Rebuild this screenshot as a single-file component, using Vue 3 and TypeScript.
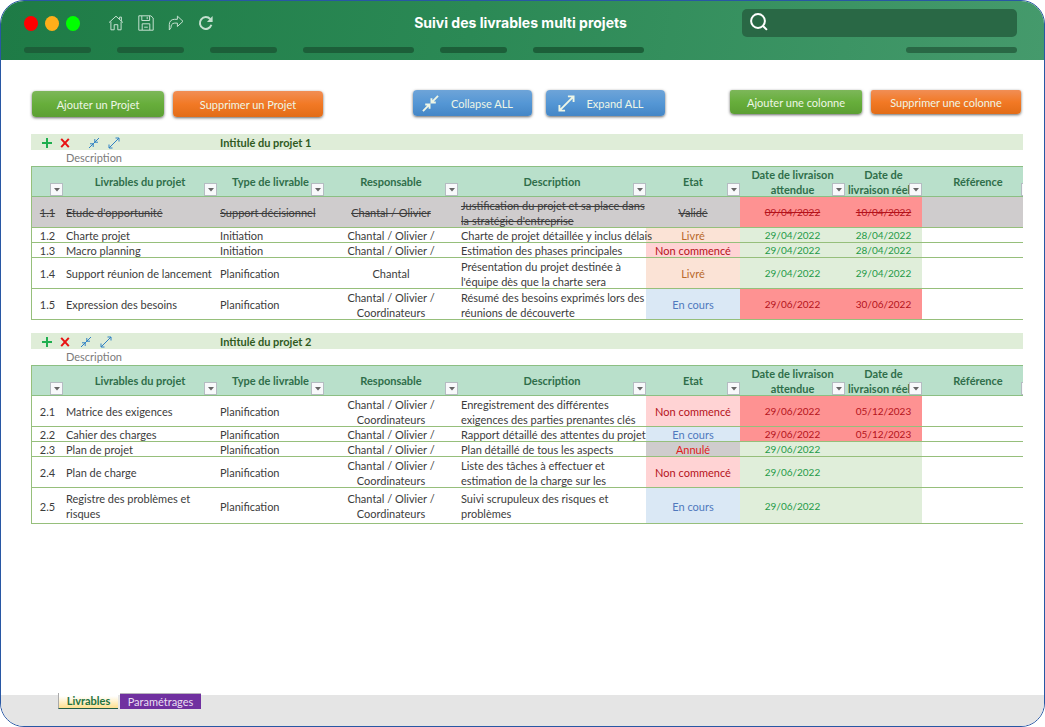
<script setup lang="ts">
import { ref } from 'vue'

type Tone = 'late' | 'ok'
type Status = 'valide' | 'livre' | 'non' | 'cours' | 'annule'

interface Row {
  id: string
  name: string
  kind: string
  owner: string
  text: string
  status: Status
  due: string
  done: string
  tone: Tone
  size: 'one' | 'two' | 'high'
}

interface Project {
  id: number
  title: string
  tight: boolean
  rows: Row[]
}

const statusLabel: Record<Status, string> = {
  valide: 'Validé',
  livre: 'Livré',
  non: 'Non commencé',
  cours: 'En cours',
  annule: 'Annulé',
}

const columns = [
  { key: 'num', label: '' },
  { key: 'name', label: 'Livrables du projet' },
  { key: 'kind', label: 'Type de livrable' },
  { key: 'owner', label: 'Responsable' },
  { key: 'text', label: 'Description' },
  { key: 'status', label: 'Etat' },
  { key: 'due', label: 'Date de livraison\nattendue' },
  { key: 'done', label: 'Date de\nlivraison réelle' },
  { key: 'reference', label: 'Référence' },
]

const both = 'Chantal / Olivier /'
const team = 'Chantal / Olivier /\nCoordinateurs'

const projects: Project[] = [
  {
    id: 1,
    title: 'Intitulé du projet 1',
    tight: false,
    rows: [
      { id: '1.1', name: "Etude d'opportunité", kind: 'Support décisionnel', owner: 'Chantal / Olivier', text: "Justification du projet et sa place dans\nla stratégie d'entreprise", status: 'valide', due: '09/04/2022', done: '10/04/2022', tone: 'late', size: 'two' },
      { id: '1.2', name: 'Charte projet', kind: 'Initiation', owner: both, text: 'Charte de projet détaillée y inclus délais', status: 'livre', due: '29/04/2022', done: '28/04/2022', tone: 'ok', size: 'one' },
      { id: '1.3', name: 'Macro planning', kind: 'Initiation', owner: both, text: 'Estimation des phases principales', status: 'non', due: '29/04/2022', done: '28/04/2022', tone: 'ok', size: 'one' },
      { id: '1.4', name: 'Support réunion de lancement', kind: 'Planification', owner: 'Chantal', text: "Présentation du projet destinée à\nl'équipe dès que la charte sera", status: 'livre', due: '29/04/2022', done: '29/04/2022', tone: 'ok', size: 'two' },
      { id: '1.5', name: 'Expression des besoins', kind: 'Planification', owner: team, text: 'Résumé des besoins exprimés lors des\nréunions de découverte', status: 'cours', due: '29/06/2022', done: '30/06/2022', tone: 'late', size: 'two' },
    ],
  },
  {
    id: 2,
    title: 'Intitulé du projet 2',
    tight: true,
    rows: [
      { id: '2.1', name: 'Matrice des exigences', kind: 'Planification', owner: team, text: 'Enregistrement des différentes\nexigences des parties prenantes clés', status: 'non', due: '29/06/2022', done: '05/12/2023', tone: 'late', size: 'two' },
      { id: '2.2', name: 'Cahier des charges', kind: 'Planification', owner: both, text: 'Rapport détaillé des attentes du projet', status: 'cours', due: '29/06/2022', done: '05/12/2023', tone: 'late', size: 'one' },
      { id: '2.3', name: 'Plan de projet', kind: 'Planification', owner: both, text: 'Plan détaillé de tous les aspects', status: 'annule', due: '29/06/2022', done: '', tone: 'ok', size: 'one' },
      { id: '2.4', name: 'Plan de charge', kind: 'Planification', owner: team, text: 'Liste des tâches à effectuer et\nestimation de la charge sur les', status: 'non', due: '29/06/2022', done: '', tone: 'ok', size: 'two' },
      { id: '2.5', name: 'Registre des problèmes et\nrisques', kind: 'Planification', owner: team, text: 'Suivi scrupuleux des risques et\nproblèmes', status: 'cours', due: '29/06/2022', done: '', tone: 'ok', size: 'high' },
    ],
  },
]

const query = ref('')
const sheet = ref('Livrables')
</script>

<template>
  <div class="window">
    <header class="titlebar">
      <div class="toprow">
        <div class="left">
          <div class="lights">
            <span class="light red"></span>
            <span class="light amber"></span>
            <span class="light green"></span>
          </div>
          <nav class="tools">
            <button type="button" aria-label="Accueil">
              <svg viewBox="0 0 16 16"><path d="M1 7.6 8 1.2l7 6.4M11.6 4.2V2.1h1.8v3.8M2.9 6.6v8.2h3.3V9.7h3.6v5.1h3.3V6.6" /></svg>
            </button>
            <button type="button" aria-label="Enregistrer">
              <svg viewBox="0 0 16 16"><path d="M.8.8h12l2.4 2.200v12.200H.8zM3.800.9v4.600h7.800V.9M9.200 1.800v2.400M4.200 15V8.800h7.600V15M6.200 12.200h3.600" /></svg>
            </button>
            <button type="button" aria-label="Partager">
              <svg viewBox="0 0 16 16"><path d="M1.3 15V9.6C1.3 6.300 3.400 4.300 6.500 4.300H9.400V1.100L15 6.300 9.400 11.500V8.100H6.700C3.800 8.100 3 10.400 3 12.500L1.300 15" /></svg>
            </button>
            <button type="button" aria-label="Actualiser">
              <svg viewBox="0 0 16 16"><path class="thick" d="M13.400 9.800A5.900 5.900 0 1 1 12.300 4.200" /><path class="solid" d="M14.600 1v5.900H8.900z" /></svg>
            </button>
          </nav>
        </div>
        <h1>Suivi des livrables multi projets</h1>
        <label class="search">
          <svg viewBox="0 0 18 18"><circle cx="8" cy="8" r="6.900" /><path d="M13 13l3.900 3.900" /></svg>
          <input v-model="query" type="text" aria-label="Rechercher" />
        </label>
      </div>
      <div class="pills">
        <i></i><i></i><i></i><i class="long"></i><i></i><i class="long"></i><i class="long last"></i>
      </div>
    </header>

    <main class="content">
      <div class="actions">
        <div class="group">
          <button type="button" class="btn btn-green">Ajouter un Projet</button>
          <button type="button" class="btn btn-orange wide">Supprimer un Projet</button>
        </div>
        <div class="group middle">
          <button type="button" class="btn btn-blue">
            <svg viewBox="0 0 18 18"><path d="M1 17l7-7M3.400 10H8v4.600M17 1l-7 7M10 3.400V8h4.600" /></svg>
            <span>Collapse ALL</span>
          </button>
          <button type="button" class="btn btn-blue">
            <svg viewBox="0 0 18 18"><path d="M1.500 16.500l15-15M10.500 1.500h6v6M1.500 10.500v6h6" /></svg>
            <span>Expand ALL</span>
          </button>
        </div>
        <div class="group right">
          <button type="button" class="btn btn-green">Ajouter une colonne</button>
          <button type="button" class="btn btn-orange wide">Supprimer une colonne</button>
        </div>
      </div>

      <section v-for="p in projects" :key="p.id" class="project">
        <div class="band">
          <div class="marks" :class="{ tight: p.tight }">
            <button type="button" class="plus" aria-label="Ajouter une ligne">
              <svg viewBox="0 0 12 12"><path d="M6 1v10M1 6h10" /></svg>
            </button>
            <button type="button" class="cross" aria-label="Supprimer une ligne">
              <svg viewBox="0 0 12 12"><path d="M2.200 1.800l7.600 8.400M9.800 1.800L2.200 10.200" /></svg>
            </button>
            <button type="button" class="blue fold" aria-label="Réduire">
              <svg viewBox="0 0 12 12"><path d="M1 11L11 1M2 6.800h3.200V10M10 5.200H6.800V2" /></svg>
            </button>
            <button type="button" class="blue" aria-label="Développer">
              <svg viewBox="0 0 12 12"><path d="M1 11L11 1M7.500 1H11v3.500M1 7.500V11h3.500" /></svg>
            </button>
          </div>
          <h2>{{ p.title }}</h2>
        </div>
        <p class="note">Description</p>
        <table>
          <colgroup>
            <col v-for="c in columns" :key="c.key" :class="'c-' + c.key" />
          </colgroup>
          <thead>
            <tr>
              <th v-for="c in columns" :key="c.key" scope="col">
                {{ c.label }}
                <button type="button" class="filter" :aria-label="'Filtrer ' + c.label">
                  <svg viewBox="0 0 6 4"><path d="M0 0h6L3 3.500z" /></svg>
                </button>
              </th>
            </tr>
          </thead>
          <tbody>
            <tr v-for="r in p.rows" :key="r.id" :class="[r.size, { closed: r.status === 'valide' }]">
              <td class="mid">{{ r.id }}</td>
              <td>{{ r.name }}</td>
              <td>{{ r.kind }}</td>
              <td class="mid">{{ r.owner }}</td>
              <td>{{ r.text }}</td>
              <td class="mid" :class="'s-' + r.status">{{ statusLabel[r.status] }}</td>
              <td class="mid date" :class="r.tone">{{ r.due }}</td>
              <td class="mid date" :class="r.tone">{{ r.done }}</td>
              <td></td>
            </tr>
          </tbody>
        </table>
      </section>
    </main>

    <footer class="tabs">
      <button type="button" class="tab active" @click="sheet = 'Livrables'">Livrables</button>
      <button type="button" class="tab violet" @click="sheet = 'Paramétrages'">Paramétrages</button>
    </footer>
  </div>
</template>

<style>
body {
  background: #fff;
}
</style>

<style scoped>
* {
  box-sizing: border-box;
}
button {
  border: 0;
  padding: 0;
  background: none;
  font: inherit;
  color: inherit;
}
svg {
  display: block;
  fill: none;
  stroke: currentColor;
}
.window {
  display: flex;
  flex-direction: column;
  min-height: 100vh;
  border: 1px solid #2857a4;
  border-radius: 24px;
  overflow: hidden;
  background: #fff;
  font-family: Lato, "Open Sans", sans-serif;
  font-size: 11px;
  line-height: 15px;
  color: #3c3c3c;
}
.titlebar {
  height: 59px;
  padding: 8px 27px 0 23px;
  background: linear-gradient(100deg, #1e7b46 0%, #2b8955 45%, #459a6c 100%);
}
.toprow {
  display: grid;
  grid-template-columns: 1fr auto 1fr;
  align-items: center;
}
.left {
  display: flex;
  align-items: center;
}
.lights {
  display: flex;
  gap: 7px;
}
.light {
  width: 14px;
  height: 15px;
  border-radius: 50%;
}
.red {
  background: #f00;
}
.amber {
  background: #ffae1a;
}
.light.green {
  background: #0f0;
}
.tools {
  display: flex;
  gap: 14px;
  margin-left: 28px;
  color: #c4e0cf;
}
.tools svg {
  width: 16px;
  height: 16px;
}
.thick {
  stroke-width: 2;
}
.solid {
  fill: currentColor;
  stroke: none;
}
h1 {
  margin: 0;
  font: 700 14px/28px Inter, sans-serif;
  color: #fff;
}
.search {
  display: flex;
  align-items: center;
  justify-self: end;
  width: 275px;
  height: 28px;
  padding: 0 8px 2px;
  border-radius: 5px;
  background: #296845;
  color: #fff;
}
.search svg {
  width: 18px;
  height: 18px;
  stroke-width: 2;
}
.search input {
  flex: 1;
  min-width: 0;
  border: 0;
  outline: 0;
  background: none;
  color: #fff;
}
.pills {
  display: flex;
  gap: 26px;
  margin-top: 10px;
}
.pills i {
  width: 67px;
  height: 6px;
  border-radius: 3px;
  background: #1c5f39;
}
.pills .long {
  width: 111px;
}
.pills .last {
  margin-left: auto;
  background: #296845;
}
.content {
  flex: 1;
  padding: 30px 21px 0 30px;
  overflow: hidden;
}
.actions {
  display: flex;
  justify-content: space-between;
  height: 44px;
}
.group {
  display: flex;
  align-items: flex-start;
  gap: 9px;
  padding: 1px 0 0 1px;
}
.middle {
  gap: 14px;
  padding-top: 0;
  margin-left: 24px;
}
.right {
  padding: 0 2px 0 0;
}
.btn {
  display: flex;
  align-items: center;
  justify-content: center;
  width: 132px;
  height: 26px;
  border-radius: 4px;
  box-shadow: 0 1px 3px rgba(0, 0, 0, 0.6);
  color: #eef6e6;
}
.wide {
  width: 150px;
}
.btn-green {
  background: linear-gradient(#7db75a, #67ae3b 50%, #5c9f33);
}
.btn-orange {
  background: linear-gradient(#f18e55, #f27925 50%, #e26c17);
}
.btn-blue {
  width: 119px;
  gap: 12px;
  padding-right: 10px;
  background: linear-gradient(#6ea4d8, #5597d5 50%, #4486c6);
}
.btn-blue svg {
  width: 17px;
  height: 17px;
  stroke-width: 2;
}
.right .btn {
  height: 24px;
  border-radius: 2px 2px 4px 4px;
}
.project {
  margin-bottom: 13px;
  overflow: hidden;
}
.band {
  display: flex;
  align-items: center;
  height: 16px;
  padding-top: 2px;
  background: #dfedd8;
}
.marks {
  display: flex;
  align-items: center;
  width: 189px;
  padding-left: 10px;
  gap: 6px;
}
.marks svg {
  width: 12px;
  height: 12px;
}
.marks .fold {
  margin-left: 11px;
}
.marks .blue + .blue {
  margin-left: 2px;
}
.marks.tight .fold {
  margin-left: 3px;
}
.plus {
  color: #1fae4f;
}
.plus svg {
  stroke-width: 2;
}
.cross {
  color: #e81313;
}
.cross svg {
  stroke-width: 2;
}
.blue {
  color: #2f80c4;
}
h2 {
  margin: 0;
  font-size: 11px;
  line-height: 14px;
  font-weight: 700;
  color: #2f5a1e;
}
.note {
  margin: 0;
  padding-left: 35px;
  line-height: 16px;
  color: #7b7b7b;
}
table {
  width: calc(100% + 11px);
  table-layout: fixed;
  border-spacing: 0;
  border-left: 1px solid #96bf7b;
}
.c-num {
  width: 31px;
}
.c-name {
  width: 154px;
}
.c-kind {
  width: 107px;
}
.c-owner {
  width: 134px;
}
.c-status {
  width: 94px;
}
.c-due {
  width: 105px;
}
.c-done {
  width: 77px;
}
.c-reference {
  width: 112px;
}
th,
td {
  box-shadow: inset 0 -1px #96bf7b;
}
th {
  position: relative;
  height: 31px;
  padding: 0;
  background: #b9e0cb;
  box-shadow: inset 0 1px #8cbf83, inset 0 -1px #8cbf83;
  font-weight: 700;
  color: #2f6e4a;
  white-space: pre-line;
}
td {
  padding: 0 0 0 3px;
  white-space: pre;
}
.mid {
  padding: 0;
  text-align: center;
}
.date {
  font-size: 10px;
}
.one td {
  height: 15px;
}
.two td {
  height: 31px;
}
.high td {
  height: 36px;
}
.closed td {
  background: #cfcccd;
  text-decoration: line-through;
}
.filter {
  position: absolute;
  right: 0;
  bottom: 1px;
  z-index: 1;
  display: grid;
  place-items: center;
  width: 13px;
  height: 13px;
  border: 1px solid #b5bcc2;
  background: #f8f9fb;
}
.filter svg {
  width: 6px;
  height: 4px;
  fill: #666;
  stroke: none;
}
.s-livre {
  background: #fbe3d6;
  color: #b8692d;
}
.s-non {
  background: #ffd3d4;
  color: #b5121b;
}
.s-cours {
  background: #dae8f5;
  color: #4f79bd;
}
.s-annule {
  background: #cfcccd;
  color: #e01b1b;
}
td.ok {
  background: #e0eeda;
  color: #1f9a48;
}
.late,
.closed td.late {
  background: #fe9292;
  color: #b5121b;
}
.tabs {
  display: flex;
  gap: 2px;
  height: 31px;
  padding-left: 57px;
  background: #e5e5e5;
}
.tab {
  height: 16px;
  margin-top: -2px;
  line-height: 14px;
}
.active {
  width: 60px;
  border-left: 1px solid #aaa;
  border-bottom: 1px solid #215c45;
  background: linear-gradient(#fff 20%, #fde08f);
  font-weight: 700;
  color: #23733f;
}
.violet {
  width: 81px;
  border-top: 1px solid #b9b4bd;
  background: #7030a0;
  color: #eadff2;
}
</style>
